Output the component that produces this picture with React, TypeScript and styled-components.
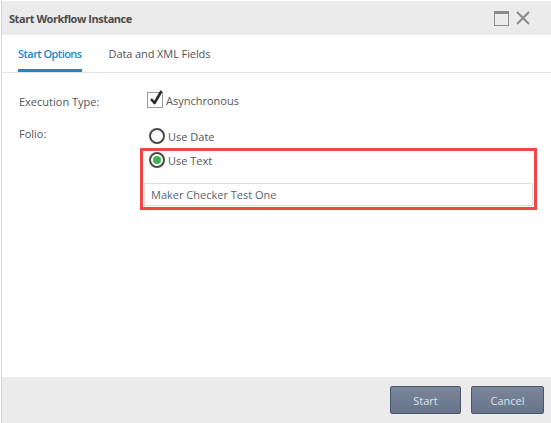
import React from 'react';
import styled, { createGlobalStyle } from 'styled-components';

const GlobalStyle = createGlobalStyle`
  html, body {
    margin: 0;
    padding: 0;
    background: #ffffff;
  }
  body {
    font-family: "Open Sans", "Noto Sans", Arial, sans-serif;
    font-size: 11px;
    color: #555;
  }
`;

const Dialog = styled.div`
  width: 550px;
  height: 422px;
  margin: 1px 0 0 1px;
  border-left: 1px solid #d6d6d6;
  box-sizing: border-box;
  display: flex;
  flex-direction: column;
  background: #fff;
`;

const Header = styled.div`
  height: 34px;
  background: #ebebeb;
  display: flex;
  align-items: center;
  justify-content: space-between;
  padding: 0 0 0 7px;
`;

const Title = styled.div`
  font-weight: 700;
  font-size: 11px;
  color: #4a4a4a;
  letter-spacing: -0.45px;
`;

const HeaderIcons = styled.div`
  display: flex;
  align-items: center;
  gap: 6px;
  padding-right: 20px;
`;

const TabBar = styled.div`
  height: 37px;
  display: flex;
  align-items: stretch;
  padding-left: 16px;
  gap: 27px;
  border-bottom: 1px solid #e4e4e4;
`;

const Tab = styled.div<{ $active?: boolean }>`
  display: flex;
  align-items: center;
  font-size: 11px;
  font-weight: ${p => (p.$active ? 600 : 400)};
  letter-spacing: ${p => (p.$active ? '-0.55px' : '-0.1px')};
  color: ${p => (p.$active ? '#1a87d0' : '#555')};
  border-bottom: 3px solid ${p => (p.$active ? '#1a87d0' : 'transparent')};
  padding-top: 3px;
  box-sizing: border-box;
`;

const Body = styled.div`
  flex: 1;
  padding: 18px 0 0 17px;
`;

const FormRow = styled.div`
  display: grid;
  grid-template-columns: 127px 1fr;
  margin-bottom: 14px;
`;

const Label = styled.div`
  font-size: 11px;
  color: #555;
  padding-top: 3px;
`;

const CheckLine = styled.div`
  display: flex;
  align-items: center;
  gap: 3px;
  padding-left: 1px;
  font-size: 11px;
  color: #555;
`;

const Box = styled.span`
  width: 14px;
  height: 14px;
  border: 1px solid #9a9a9a;
  background: #fff;
  position: relative;
  display: inline-block;
`;

const CheckMark = styled.svg`
  position: absolute;
  left: 1px;
  top: -3px;
`;

const Options = styled.div`
  display: flex;
  flex-direction: column;
  margin-left: -3px;
  padding-top: 5px;
`;

const RadioLine = styled.div<{ $indent: number }>`
  display: flex;
  align-items: center;
  gap: 3px;
  height: 16px;
  margin: 0 0 8px ${p => p.$indent}px;
  font-size: 11px;
  color: #555;
`;

const Radio = styled.span<{ $checked?: boolean }>`
  width: 12px;
  height: 12px;
  border: 2px solid #4a4a4a;
  border-radius: 50%;
  background: #fff;
  display: inline-flex;
  align-items: center;
  justify-content: center;
  &::after {
    content: '';
    width: 8px;
    height: 8px;
    border-radius: 50%;
    background: ${p => (p.$checked ? '#3cb550' : 'transparent')};
  }
`;

const Highlight = styled.div`
  border: 3px solid #f04646;
  width: 397px;
  box-sizing: border-box;
  padding: 1px;
  margin: -4px 0 0 -3px;
`;

const TextInput = styled.input`
  display: block;
  width: 100%;
  height: 23px;
  box-sizing: border-box;
  margin-top: 15px;
  border: 1px solid #dedede;
  padding: 0 6px;
  font-family: "Open Sans", "Noto Sans", Arial, sans-serif;
  font-size: 11px;
  color: #5d6470;
  outline: none;
`;

const Footer = styled.div`
  height: 46px;
  background: #ebebeb;
  display: flex;
  align-items: center;
  justify-content: flex-end;
  gap: 10px;
  padding-right: 7px;
`;

const Button = styled.button<{ $w: number }>`
  width: ${p => p.$w}px;
  height: 28px;
  border: 1px solid #4c5667;
  border-radius: 2px;
  background: linear-gradient(#7a879a, #66738a);
  color: #dfe3ea;
  font-family: "Open Sans", "Noto Sans", Arial, sans-serif;
  font-size: 11px;
  cursor: pointer;
`;

export default function App() {
  return (
    <>
      <GlobalStyle />
      <Dialog>
        <Header>
          <Title>Start Workflow Instance</Title>
          <HeaderIcons>
            <svg width="15" height="15" viewBox="0 0 15 15">
              <rect x="0.5" y="0.5" width="14" height="14" fill="none" stroke="#8a8a8a" strokeWidth="1" />
              <rect x="0" y="0" width="15" height="3" fill="#8a8a8a" />
            </svg>
            <svg width="16" height="16" viewBox="0 0 16 16">
              <path d="M2 2 L14 14 M14 2 L2 14" stroke="#8a8a8a" strokeWidth="2" />
            </svg>
          </HeaderIcons>
        </Header>
        <TabBar>
          <Tab $active>Start Options</Tab>
          <Tab>Data and XML Fields</Tab>
        </TabBar>
        <Body>
          <FormRow>
            <Label>Execution Type:</Label>
            <CheckLine>
              <Box>
                <CheckMark width="14" height="15" viewBox="0 0 14 15">
                  <path d="M2 9 L5.5 13 L12.5 1" fill="none" stroke="#2b2b2b" strokeWidth="2.6" strokeLinejoin="round" />
                </CheckMark>
              </Box>
              Asynchronous
            </CheckLine>
          </FormRow>
          <FormRow>
            <Label>Folio:</Label>
            <Options>
              <RadioLine $indent={6}>
                <Radio />
                Use Date
              </RadioLine>
              <Highlight>
                <RadioLine $indent={5}>
                  <Radio $checked />
                  Use Text
                </RadioLine>
                <TextInput readOnly value="Maker Checker Test One" />
              </Highlight>
            </Options>
          </FormRow>
        </Body>
        <Footer>
          <Button $w={71}>Start</Button>
          <Button $w={73}>Cancel</Button>
        </Footer>
      </Dialog>
    </>
  );
}
